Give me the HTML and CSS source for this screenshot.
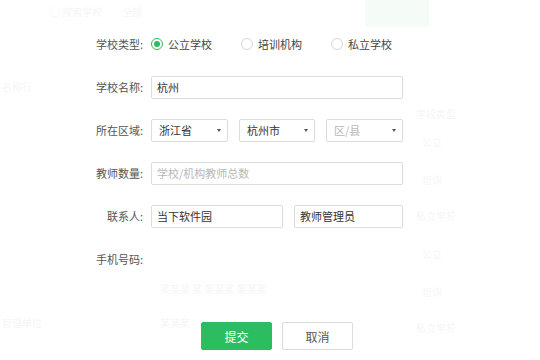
FILE: index.html
```html
<!DOCTYPE html>
<html lang="zh-CN">
<head>
<meta charset="utf-8">
<title>学校信息</title>
<link rel="stylesheet" href="styles.css">
</head>
<body>
<div class="backdrop" aria-hidden="true">
  <span class="ghost g-search">□ 搜索学校 &nbsp;&nbsp;&nbsp;&nbsp;&nbsp;&nbsp;&nbsp; 全部</span>
  <span class="ghost-btn"></span>
  <span class="ghost g-left1">名称行</span>
  <span class="ghost g-left2">管理单位</span>
  <span class="ghost g-mid">某某某 某 某某某 某某某</span>
  <span class="ghost g-mid2">某某某</span>
  <span class="ghost g-r1">学校类型</span>
  <span class="ghost g-r2">公立</span>
  <span class="ghost g-r3">培训</span>
  <span class="ghost g-r4">私立学校</span>
  <span class="ghost g-r5">公立</span>
  <span class="ghost g-r6">培训</span>
  <span class="ghost g-r7">私立学校</span>
</div>

<form class="dialog">
  <div class="row">
    <span class="lbl">学校类型:</span>
    <div class="radios">
      <span class="radio checked"><i></i>公立学校</span>
      <span class="radio"><i></i>培训机构</span>
      <span class="radio"><i></i>私立学校</span>
    </div>
  </div>

  <div class="row">
    <span class="lbl">学校名称:</span>
    <input class="field w-full" type="text" value="杭州">
  </div>

  <div class="row">
    <span class="lbl">所在区域:</span>
    <div class="selects">
      <div class="select s-a">浙江省<b class="caret"></b></div>
      <div class="select s-b">杭州市<b class="caret"></b></div>
      <div class="select s-a placeholder">区/县<b class="caret"></b></div>
    </div>
  </div>

  <div class="row">
    <span class="lbl">教师数量:</span>
    <input class="field w-full" type="text" placeholder="学校/机构教师总数">
  </div>

  <div class="row">
    <span class="lbl">联系人:</span>
    <div class="pair">
      <input class="field w-name" type="text" value="当下软件园">
      <input class="field w-role" type="text" value="教师管理员">
    </div>
  </div>

  <div class="row">
    <span class="lbl">手机号码:</span>
  </div>

  <div class="actions">
    <button type="button" class="btn primary">提交</button>
    <button type="button" class="btn">取消</button>
  </div>
</form>
</body>
</html>
```

FILE: styles.css
```css
* { box-sizing: border-box; }

html, body {
  margin: 0;
  padding: 0;
  width: 540px;
  height: 360px;
  background: #ffffff;
  overflow: hidden;
  font-family: "Noto Sans CJK SC", "Noto Sans", sans-serif;
  font-size: 11px;
  color: #555;
}

/* faint page content behind the dialog */
.backdrop {
  position: absolute;
  inset: 0;
  pointer-events: none;
}
.ghost {
  position: absolute;
  color: #f6f6f6;
  font-size: 10px;
  white-space: nowrap;
}
.ghost-btn {
  position: absolute;
  left: 365px;
  top: 0;
  width: 64px;
  height: 27px;
  background: #f5fbf7;
}
.g-search { left: 50px; top: 4px; }
.g-left1 { left: 2px; top: 79px; }
.g-left2 { left: 2px; top: 315px; }
.g-mid { left: 160px; top: 281px; }
.g-mid2 { left: 160px; top: 315px; }
.g-r1 { left: 416px; top: 106px; }
.g-r2 { left: 422px; top: 134px; }
.g-r3 { left: 422px; top: 172px; }
.g-r4 { left: 416px; top: 208px; }
.g-r5 { left: 422px; top: 246px; }
.g-r6 { left: 422px; top: 284px; }
.g-r7 { left: 416px; top: 320px; }

/* dialog form */
.dialog {
  position: relative;
  padding-top: 33px;
  display: flex;
  flex-direction: column;
  gap: 21px;
}

.row {
  display: flex;
  align-items: center;
  height: 22px;
}
.row-tight { margin-top: -2px; }

.lbl {
  width: 143px;
  margin-right: 8px;
  text-align: right;
  color: #555;
  white-space: nowrap;
}

/* radios */
.radios {
  display: flex;
  gap: 29px;
}
.radio {
  display: inline-flex;
  align-items: center;
  gap: 5px;
  color: #444;
  width: 61px;
  white-space: nowrap;
}
.radio i {
  width: 12px;
  height: 12px;
  border: 1px solid #d6d6d6;
  border-radius: 50%;
  background: #fff;
  flex: none;
  position: relative;
}
.radio.checked i {
  border-color: #2bbd5f;
}
.radio.checked i::after {
  content: "";
  position: absolute;
  left: 2px;
  top: 2px;
  width: 6px;
  height: 6px;
  border-radius: 50%;
  background: #2bbd5f;
}

/* text fields */
.field {
  height: 23px;
  border: 1px solid #dcdcdc;
  border-radius: 2px;
  padding: 0 5px;
  font: inherit;
  color: #333;
  background: #fff;
  outline: none;
}
.field::placeholder { color: #b8b8b8; }
.w-full { width: 252px; }

.pair {
  display: flex;
  gap: 11px;
}
.w-name { width: 132px; }
.w-role { width: 109px; }

/* selects */
.selects {
  display: flex;
  gap: 11px;
}
.select {
  height: 23px;
  border: 1px solid #dcdcdc;
  border-radius: 2px;
  padding: 0 7px;
  display: flex;
  align-items: center;
  justify-content: space-between;
  color: #333;
  background: #fff;
}
.s-a { width: 77px; }
.s-b { width: 76px; }
.select.placeholder { color: #b8b8b8; }
.caret {
  width: 0;
  height: 0;
  border-left: 2.5px solid transparent;
  border-right: 2.5px solid transparent;
  border-top: 3px solid #555;
  margin-right: -1px;
}

/* buttons */
.actions {
  display: flex;
  gap: 10px;
  padding-left: 201px;
  margin-top: 31px;
}
.btn {
  width: 71px;
  height: 28px;
  border-radius: 2px;
  font: inherit;
  font-size: 12px;
  border: 1px solid #dcdcdc;
  background: #fff;
  color: #555;
  padding: 0;
}
.btn.primary {
  background: #2bbd5f;
  border-color: #2bbd5f;
  color: #fff;
}
```
